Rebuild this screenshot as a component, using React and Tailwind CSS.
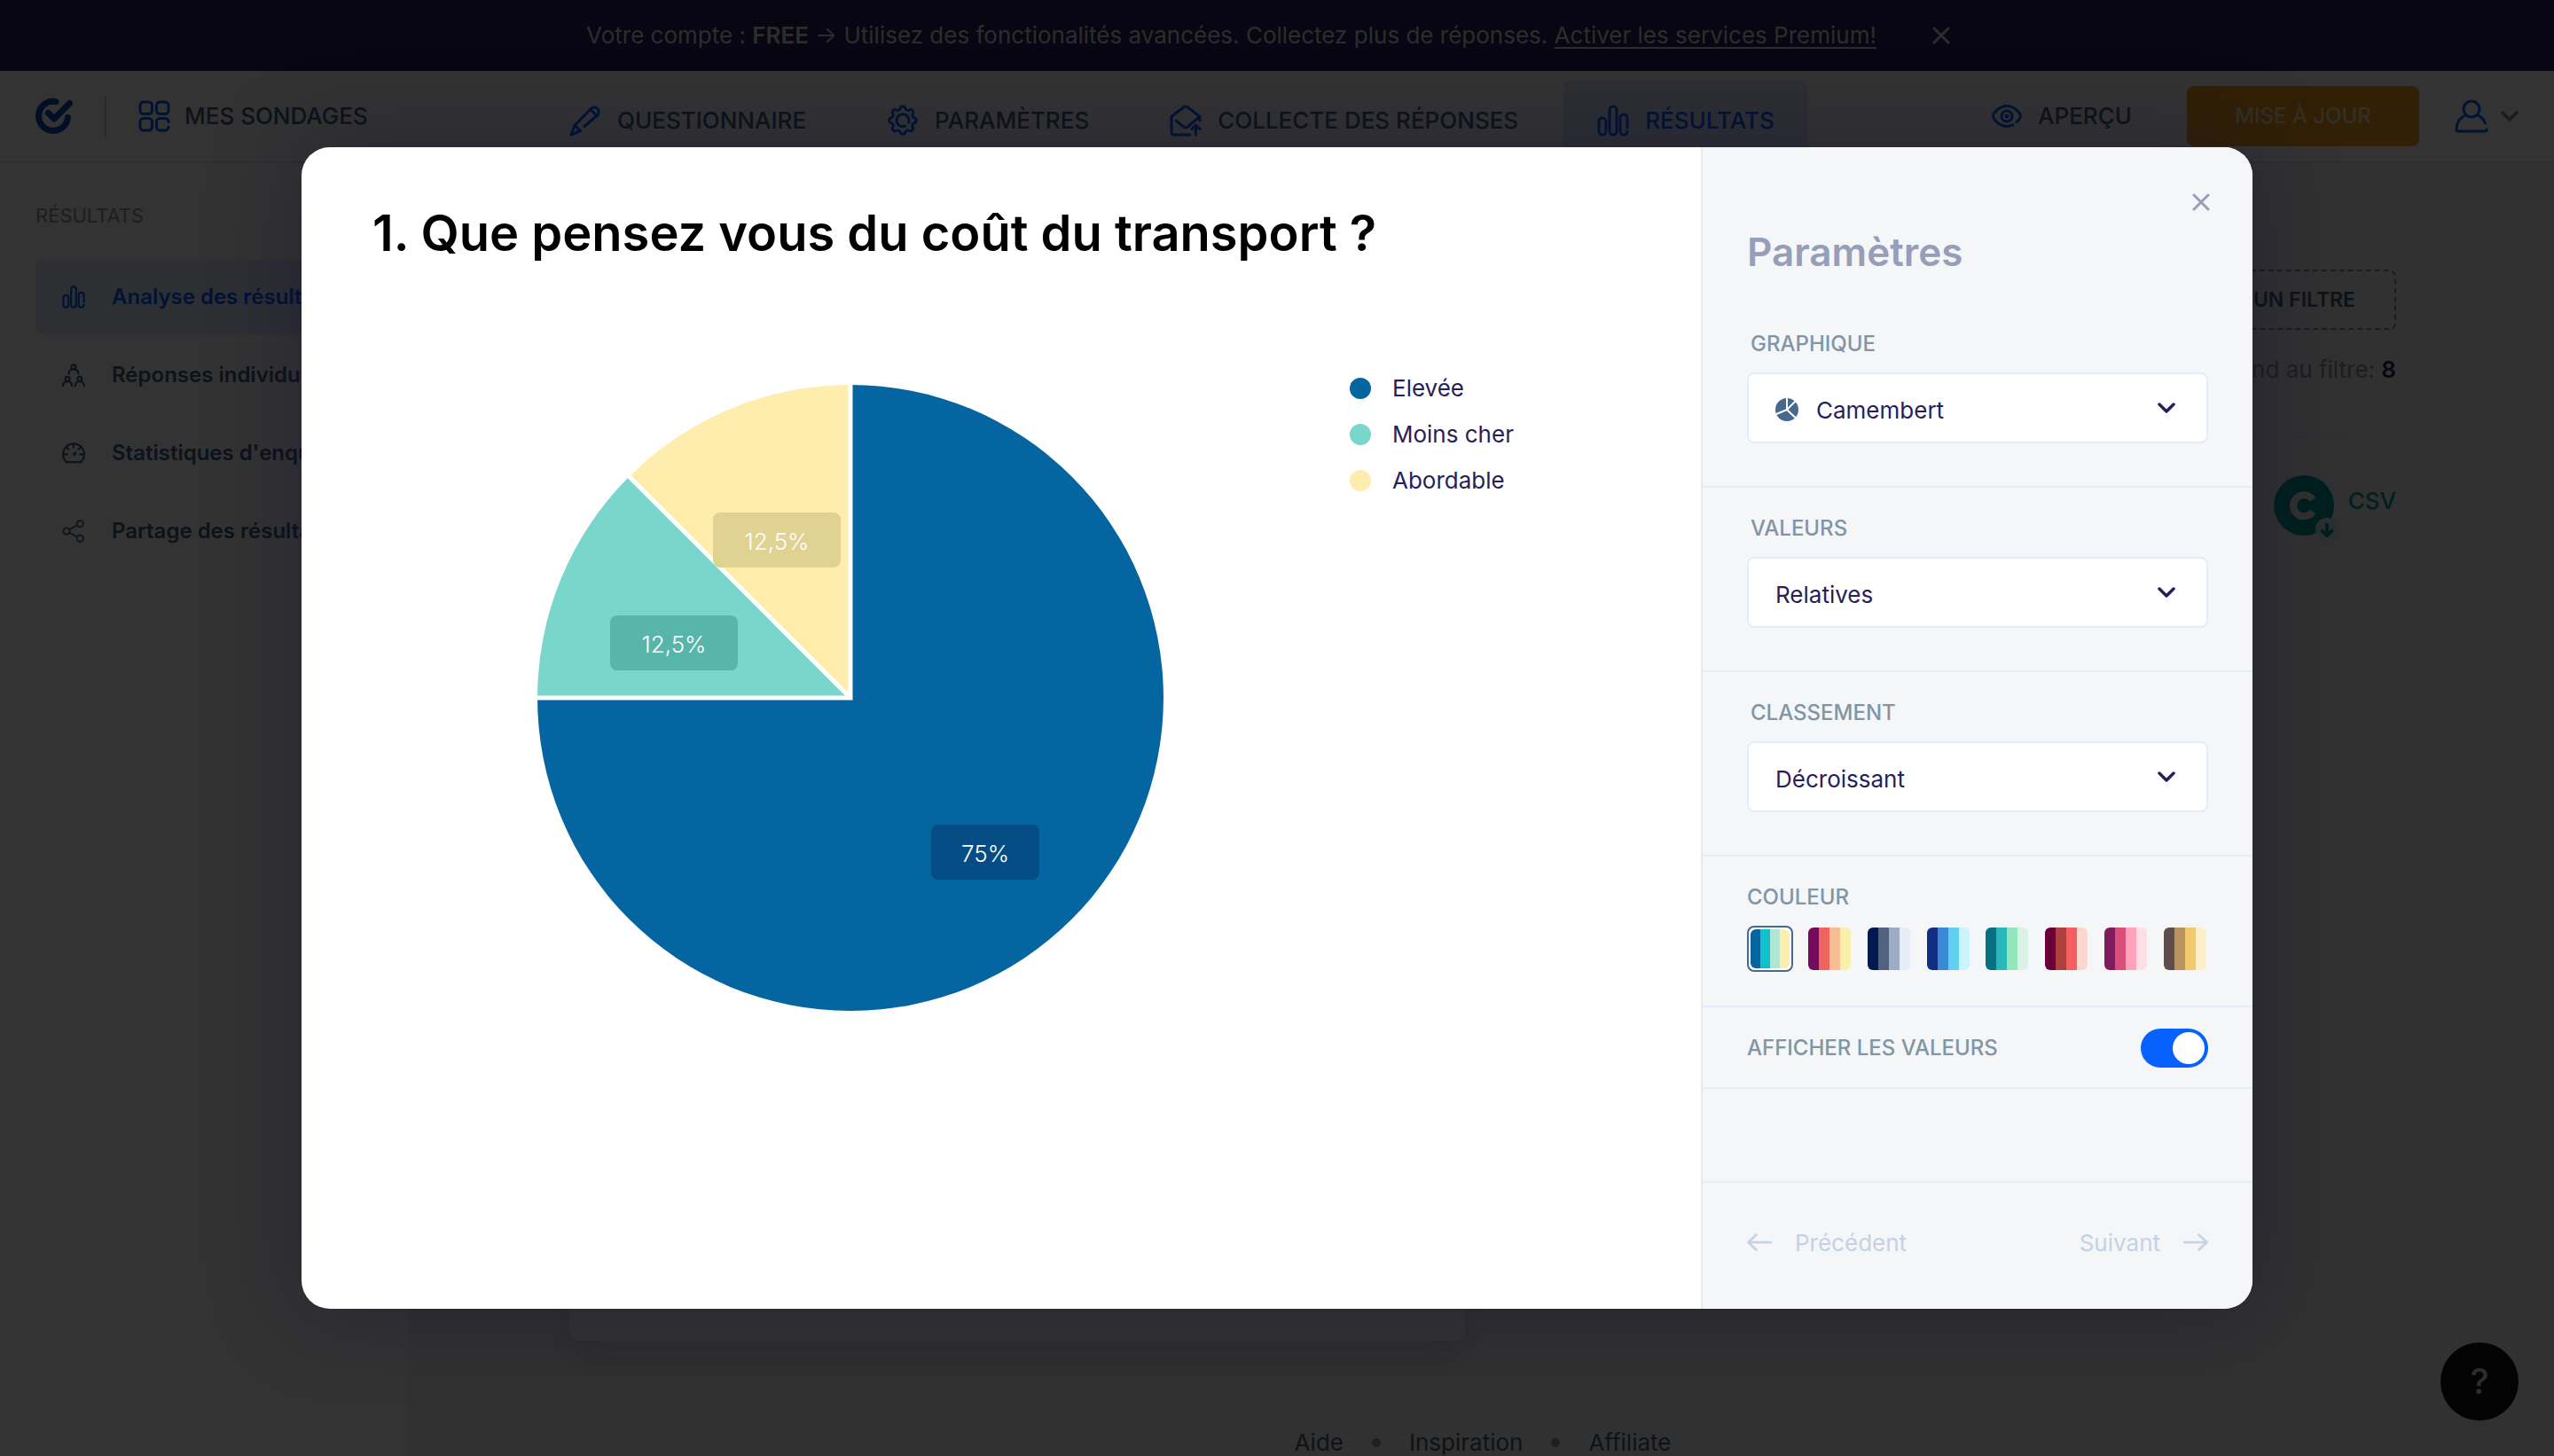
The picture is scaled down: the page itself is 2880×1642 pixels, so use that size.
import { useState } from "react";

const stroke = {
  fill: "none",
  stroke: "currentColor",
  strokeWidth: 3,
  strokeLinecap: "round",
  strokeLinejoin: "round",
};

function Logo() {
  return (
    <svg viewBox="0 0 42 42" className="size-[42px] text-[#0646b0]" aria-hidden="true">
      <g fill="none" stroke="currentColor" strokeWidth="7" strokeLinecap="round" strokeLinejoin="round">
        <path d="M23 4.6A16.5 16.5 0 1 0 36.5 22.5" />
        <path d="M14.5 17.5 21 24 38.5 6.5" />
      </g>
    </svg>
  );
}

function GridIcon() {
  return (
    <svg viewBox="0 0 36 36" className="size-9" aria-hidden="true">
      <g {...stroke}>
        <rect x="2" y="2" width="13.5" height="13.5" rx="4" />
        <rect x="20.5" y="2" width="13.5" height="13.5" rx="4" />
        <rect x="2" y="20.5" width="13.5" height="13.5" rx="4" />
        <path d="M34 24.5a4 4 0 0 0-4-4h-5.500a4 4 0 0 0-4 4v5.500a4 4 0 0 0 4 4h5.500a4 4 0 0 0 4-4" />
      </g>
    </svg>
  );
}

function PencilIcon() {
  return (
    <svg viewBox="0 0 36 36" className="size-9" aria-hidden="true">
      <g {...stroke}>
        <path d="M17 24.500 31.500 12a5 5 0 0 0 .6-7 5 5 0 0 0-7.400-.6L6 23.500 2 34l10.500-4.500" />
        <path d="M24 5.500l7.500 7.500M6 23.500l6.500 6" />
      </g>
    </svg>
  );
}

function GearIcon() {
  return (
    <svg viewBox="0 0 36 36" className="size-9" aria-hidden="true">
      <g {...stroke}>
        <path d="M15.200 4.200a2.900 2.900 0 0 1 5.600 0 3.200 3.200 0 0 0 4.500 1.900 2.900 2.900 0 0 1 4 4 3.200 3.200 0 0 0 1.900 4.800 2.900 2.900 0 0 1 0 5.600 3.200 3.200 0 0 0-1.900 4.800 2.900 2.900 0 0 1-4 4 3.200 3.200 0 0 0-4.500 1.900 2.900 2.900 0 0 1-5.600 0 3.200 3.200 0 0 0-4.500-1.900 2.900 2.900 0 0 1-4-4 3.200 3.200 0 0 0-1.900-4.800 2.900 2.900 0 0 1 0-5.600 3.200 3.200 0 0 0 1.900-4.800 2.900 2.900 0 0 1 4-4 3.200 3.200 0 0 0 4.500-1.900z" />
        <path d="M20.500 24.200A7 7 0 1 1 24.600 20" />
      </g>
    </svg>
  );
}

function EnvelopeIcon() {
  return (
    <svg viewBox="0 0 36 36" className="size-9" aria-hidden="true">
      <g {...stroke}>
        <path d="M2 13.500 16 2.800a3.300 3.300 0 0 1 4 0L34 13.500V18" />
        <path d="M2 13.500V31a3 3 0 0 0 3 3h18" />
        <path d="M7 18l9 7.200a3.300 3.300 0 0 0 4 0L33.500 14" />
        <path d="M29.500 34V24M25 27.500l4.500-4.500 4.500 4.500" />
      </g>
    </svg>
  );
}

function BarsIcon({ className }) {
  return (
    <svg viewBox="0 0 36 36" className={className} aria-hidden="true">
      <g {...stroke}>
        <rect x="2" y="15" width="8" height="19" rx="4" />
        <rect x="14" y="2" width="8" height="32" rx="4" />
        <path d="M34 26V15a4 4 0 0 0-8 0v15a4 4 0 0 0 8 0" />
      </g>
    </svg>
  );
}

function PeopleIcon() {
  return (
    <svg viewBox="0 0 36 36" className="size-[26px]" aria-hidden="true">
      <g {...stroke}>
        <circle cx="18" cy="5.500" r="3.500" />
        <path d="M10.500 16c0-4.500 3-7 7.500-7s7.500 2.500 7.500 7" />
        <circle cx="8.500" cy="24" r="3.500" />
        <path d="M1.500 35c0-4.500 2.500-7 7-7s7 2.500 7 7" />
        <circle cx="27.500" cy="24" r="3.500" />
        <path d="M20.500 35c0-4.500 2.500-7 7-7s7 2.500 7 7" />
      </g>
    </svg>
  );
}

function GaugeIcon() {
  return (
    <svg viewBox="0 0 36 36" className="size-[26px]" aria-hidden="true">
      <g {...stroke}>
        <path d="M7 32a16.500 16.500 0 1 1 22 0z" />
        <path d="M18 4v5M3 20h5M28 20h5M8 10l2 2M28 10l-2 2" />
      </g>
      <path d="M23.500 14.500 20 23.500l-2-2.500-3-1.500z" fill="currentColor" />
    </svg>
  );
}

function ShareIcon() {
  return (
    <svg viewBox="0 0 36 36" className="size-[26px]" aria-hidden="true">
      <g {...stroke} strokeWidth="2.500">
        <circle cx="7" cy="18" r="5" />
        <circle cx="28" cy="6.500" r="5" />
        <circle cx="28" cy="29.500" r="5" />
        <path d="M11.500 15.500 23.500 9M11.500 20.500 23.500 27" />
      </g>
    </svg>
  );
}

function EyeIcon() {
  return (
    <svg viewBox="0 0 34 26" className="h-[26px] w-[34px] text-[#0661ff]" aria-hidden="true">
      <g {...stroke}>
        <path d="M28 19.500c2.600-2.200 4.500-4.900 4.500-6.500C32.500 9.500 25 1.500 17 1.500S1.500 9.500 1.500 13 9 24.500 17 24.500c2.500 0 4.700-.6 6.800-1.600" />
        <circle cx="17" cy="13" r="6" />
      </g>
      <circle cx="17" cy="13" r="2.500" fill="currentColor" />
    </svg>
  );
}

function UserIcon() {
  return (
    <svg viewBox="0 0 38 38" className="size-[38px] text-[#0661ff]" aria-hidden="true">
      <g {...stroke}>
        <circle cx="19" cy="11" r="9" />
        <path d="M12.500 17.500C6 20.500 2 26.500 2 34a2 2 0 0 0 2 2h30a2 2 0 0 0 2-2M25.500 17.500c4.500 2 7.500 5 9 9.500" />
      </g>
    </svg>
  );
}

function Cross({ className }) {
  return (
    <svg viewBox="0 0 20 20" className={className} aria-hidden="true">
      <path d="M2 2l16 16M18 2 2 18" fill="none" stroke="currentColor" strokeWidth="3" strokeLinecap="round" />
    </svg>
  );
}

function Chevron({ className }) {
  return (
    <svg viewBox="0 0 20 12" className={className} aria-hidden="true">
      <path d="M2 2l8 8 8-8" fill="none" stroke="currentColor" strokeWidth="3.500" strokeLinecap="round" strokeLinejoin="round" />
    </svg>
  );
}

function Arrow({ right }) {
  return (
    <svg viewBox="0 0 28 20" className="h-5 w-7" aria-hidden="true">
      <path
        d={right ? "M1 10h25.500M17.500 1.500 26.500 10l-9 8.500" : "M27 10H1.500M10.500 1.500 1.500 10l9 8.500"}
        fill="none"
        stroke="currentColor"
        strokeWidth="2.500"
        strokeLinecap="round"
        strokeLinejoin="round"
      />
    </svg>
  );
}

function MiniPie() {
  return (
    <svg viewBox="0 0 26 26" className="size-[26px]" aria-hidden="true">
      <circle cx="13" cy="13" r="13" fill="#466a8c" />
      <path d="M13 0v13L1 18M13 13l9.500-9.500M13 13l10 9.500" fill="none" stroke="#fff" strokeWidth="2" />
    </svg>
  );
}

const navItems = [
  { label: "QUESTIONNAIRE", icon: <PencilIcon /> },
  { label: "PARAMÈTRES", icon: <GearIcon /> },
  { label: "COLLECTE DES RÉPONSES", icon: <EnvelopeIcon /> },
  { label: "RÉSULTATS", icon: <BarsIcon className="size-9" />, active: true },
];

const sideItems = [
  { label: "Analyse des résultats", icon: <BarsIcon className="size-[26px]" />, active: true },
  { label: "Réponses individuelles", icon: <PeopleIcon /> },
  { label: "Statistiques d'enquête", icon: <GaugeIcon /> },
  { label: "Partage des résultats", icon: <ShareIcon /> },
];

function Banner() {
  return (
    <div className="flex h-20 items-center justify-center bg-[#281e5a] pr-5 text-[26px] leading-9 text-[#dcdcdc]">
      <p>
        Votre compte : <strong className="font-semibold">FREE</strong> → Utilisez des fonctionalités avancées. Collectez
        plus de réponses.{" "}
        <a href="#premium" className="underline underline-offset-4">
          Activer les services Premium!
        </a>
      </p>
      <button type="button" aria-label="Fermer le bandeau" className="ml-[63px]">
        <Cross className="size-5" />
      </button>
    </div>
  );
}

function Header() {
  return (
    <header className="flex h-[104px] border-b-2 border-[#e1ebfa] bg-white text-[26px] leading-9 font-medium text-[#41607d]">
      <div className="flex w-[602px] shrink-0 items-center pl-10">
        <Logo />
        <span className="mr-9 ml-9 h-[46px] w-0.5 bg-[#c8d7e6]" />
        <a href="#sondages" className="flex items-center gap-4">
          <span className="text-[#0661ff]">
            <GridIcon />
          </span>
          MES SONDAGES
        </a>
      </div>
      <nav className="flex flex-1 items-end gap-[11px] whitespace-nowrap">
        {navItems.map((item) => (
          <a
            key={item.label}
            href="#nav"
            className={
              item.active
                ? "flex h-[92px] items-center gap-[18px] rounded-t-xl bg-[#e1ebff] px-[38px] text-[#0661ff]"
                : "flex h-[92px] items-center gap-[18px] px-10"
            }
          >
            <span className="text-[#0661ff]">{item.icon}</span>
            {item.label}
          </a>
        ))}
      </nav>
      <div className="flex items-center pr-10">
        <a href="#apercu" className="mr-[62px] flex items-center gap-[18px]">
          <EyeIcon />
          APERÇU
        </a>
        <button type="button" className="mr-10 h-[68px] w-[262px] rounded-lg bg-[#f5a019] text-2xl font-medium text-[#ffe6be]">
          MISE À JOUR
        </button>
        <button type="button" aria-label="Compte" className="flex items-center gap-[14px] text-[#7d8c9b]">
          <UserIcon />
          <Chevron className="h-3 w-5" />
        </button>
      </div>
    </header>
  );
}

function Sidebar() {
  return (
    <aside className="w-[462px] shrink-0 border-r-2 border-[#f2f2f2] bg-white pt-[43px] pl-10">
      <h2 className="text-[22px] leading-8 text-[#8c96aa]">RÉSULTATS</h2>
      <ul className="mt-[34px] flex flex-col gap-1 text-2xl font-semibold text-[#41607d]">
        {sideItems.map((item) => (
          <li key={item.label}>
            <a
              href="#section"
              className={
                item.active
                  ? "flex h-[84px] items-center gap-[30px] rounded-lg bg-[#e1ebff] px-[30px] text-[#0661ff]"
                  : "flex h-[84px] items-center gap-[30px] px-[30px]"
              }
            >
              {item.icon}
              {item.label}
            </a>
          </li>
        ))}
      </ul>
    </aside>
  );
}

function Main() {
  return (
    <main className="flex min-w-0 flex-1 flex-col bg-[#f5f5f5] pr-[178px] pl-[180px]">
      <div className="flex flex-col items-end pt-[120px]">
        <button
          type="button"
          className="h-[68px] rounded-lg border-2 border-dashed border-[#828c96] px-11 text-[23px] font-semibold text-[#41607d]"
        >
          AJOUTER UN FILTRE
        </button>
        <p className="mt-[27px] text-[26px] leading-9 text-[#8c96aa]">
          Correspond au filtre: <strong className="font-semibold text-[#281e5a]">8</strong>
        </p>
      </div>
      <hr className="mt-[57px] border-t-2 border-[#e6ebf5]" />
      <div className="mt-[42px] flex justify-end">
        <a href="#csv" className="flex h-[68px] items-start gap-[10px] text-[26px] leading-[58px] font-medium text-[#059b96]">
          <svg viewBox="0 0 74 74" className="-mb-1.5 size-[74px]" aria-hidden="true">
            <circle cx="34" cy="34" r="34" fill="#059b96" />
            <path d="M44 27.500a12 12 0 1 0 0 13.500" fill="none" stroke="#f5f5f5" strokeWidth="8" />
            <circle cx="60" cy="61" r="13" fill="#d2f0f0" />
            <path d="M60 54v13M53.500 61.500 60 68l6.500-6.500" fill="none" stroke="#059b96" strokeWidth="4" />
          </svg>
          CSV
        </a>
      </div>
      <div className="mt-[68px] h-[840px] w-[1010px] shrink-0 rounded-xl bg-white shadow-[0_20px_40px_rgba(40,30,90,0.12)]" />
      <footer className="mt-[95px] flex items-center justify-center gap-8 text-[26px] leading-10 whitespace-nowrap text-[#41607d]">
        <a href="#aide">Aide</a>
        <span className="size-2.5 rounded-full bg-[#9696af]" />
        <a href="#inspiration">Inspiration</a>
        <span className="size-2.5 rounded-full bg-[#9696af]" />
        <a href="#affiliate">Affiliate</a>
      </footer>
    </main>
  );
}

const slices = [
  { label: "Elevée", dot: "bg-[#0565a0]" },
  { label: "Moins cher", dot: "bg-[#79d6ca]" },
  { label: "Abordable", dot: "bg-[#ffedae]" },
];

function PieChart({ showValues }) {
  return (
    <svg viewBox="0 0 706 706" className="mt-[22px] size-[706px] shrink-0" role="img" aria-label="Répartition des réponses">
      <path d="M353 353V0A353 353 0 1 1 0 353z" fill="#0565a0" />
      <path d="M353 353H0A353 353 0 0 1 103.400 103.400z" fill="#79d6ca" />
      <path d="M353 353 103.400 103.400A353 353 0 0 1 353 0z" fill="#ffedae" />
      <path d="M353 0v353H0M353 353 102 102" fill="none" stroke="#fff" strokeWidth="5" />
      {showValues && (
        <g className="text-[26px] font-light" fill="#fff" textAnchor="middle">
          <rect x="444" y="496" width="122" height="62" rx="8" fill="#054d84" />
          <text x="505" y="538">75%</text>
          <rect x="82" y="260" width="144" height="62" rx="8" fill="#57b5aa" />
          <text x="154" y="302">12,5%</text>
          <rect x="198" y="144" width="144" height="62" rx="8" fill="#dfd293" />
          <text x="270" y="186">12,5%</text>
        </g>
      )}
    </svg>
  );
}

function SelectField({ id, label, options, icon, className }) {
  return (
    <div className={className}>
      <label htmlFor={id} className="block pl-1 text-2xl leading-8 font-medium text-[#8295a5]">
        {label}
      </label>
      <div className="relative mt-4">
        {icon && <span className="pointer-events-none absolute inset-y-0 left-8 flex items-center pt-1">{icon}</span>}
        <select
          id={id}
          className={
            icon
              ? "h-20 w-full appearance-none rounded-lg border-2 border-[#e3edfa] bg-white pt-1 pl-[76px] text-[26px] text-[#281e5a]"
              : "h-20 w-full appearance-none rounded-lg border-2 border-[#e3edfa] bg-white pt-1 pl-[30px] text-[26px] text-[#281e5a]"
          }
        >
          {options.map((option) => (
            <option key={option}>{option}</option>
          ))}
        </select>
        <span className="pointer-events-none absolute inset-y-0 right-[37px] flex items-center text-[#281e5a]">
          <Chevron className="h-3 w-5" />
        </span>
      </div>
    </div>
  );
}

const palettes = [
  ["bg-[#0565a0]", "bg-[#10c1cc]", "bg-[#b0e6d4]", "bg-[#ffedae]"],
  ["bg-[#750b5c]", "bg-[#ef655e]", "bg-[#f7bd93]", "bg-[#f9f0a9]"],
  ["bg-[#001a50]", "bg-[#516182]", "bg-[#9dadc6]", "bg-[#e5edf6]"],
  ["bg-[#112f82]", "bg-[#3989d6]", "bg-[#62cff0]", "bg-[#cdf4fc]"],
  ["bg-[#067180]", "bg-[#28b8ba]", "bg-[#93e5ba]", "bg-[#daf1e7]"],
  ["bg-[#6a0038]", "bg-[#ad3f3f]", "bg-[#f65f60]", "bg-[#ffd7ce]"],
  ["bg-[#831a60]", "bg-[#d85079]", "bg-[#ffa2ba]", "bg-[#ffdfe4]"],
  ["bg-[#5e4d4b]", "bg-[#b89261]", "bg-[#f0ca6b]", "bg-[#ffefc8]"],
];

function Palettes() {
  const [selected, setSelected] = useState(0);
  return (
    <fieldset className="border-b-2 border-[#e3edfa] px-[50px] pt-[30px] pb-[38px]">
      <legend className="float-left w-full text-2xl leading-8 font-medium text-[#8295a5]">COULEUR</legend>
      <div className="flex w-full justify-between pt-4">
        {palettes.map((colors, i) => (
          <label
            key={colors[0]}
            className={
              i === selected
                ? "block size-[52px] rounded-lg border-2 border-[#466a8c] bg-white p-0.5"
                : "block size-[52px] p-0.5"
            }
          >
            <input
              type="radio"
              name="palette"
              aria-label={`Palette ${i + 1}`}
              checked={i === selected}
              onChange={() => setSelected(i)}
              className="sr-only"
            />
            <span className="flex h-full w-full overflow-hidden rounded-md">
              {colors.map((c) => (
                <span key={c} className={`flex-1 ${c}`} />
              ))}
            </span>
          </label>
        ))}
      </div>
    </fieldset>
  );
}

function Settings({ showValues, onToggle }) {
  return (
    <section className="flex w-[622px] shrink-0 flex-col border-l-2 border-[#e9e9eb] bg-[#f4f6f8]">
      <div className="flex justify-end pt-[42px] pr-[38px]">
        <button type="button" aria-label="Fermer" className="flex size-10 items-center justify-center text-[#969eb9]">
          <Cross className="size-5" />
        </button>
      </div>
      <h2 className="mt-1.5 px-[50px] text-[44px] leading-[60px] font-semibold text-[#969eb9]">Paramètres</h2>
      <SelectField
        id="chart"
        label="GRAPHIQUE"
        options={["Camembert"]}
        icon={<MiniPie />}
        className="mt-[58px] border-b-2 border-[#e3edfa] px-[50px] pb-12"
      />
      <SelectField
        id="values"
        label="VALEURS"
        options={["Relatives"]}
        className="border-b-2 border-[#e3edfa] px-[50px] pt-[30px] pb-12"
      />
      <SelectField
        id="order"
        label="CLASSEMENT"
        options={["Décroissant"]}
        className="border-b-2 border-[#e3edfa] px-[50px] pt-[30px] pb-12"
      />
      <Palettes />
      <label className="flex h-[92px] cursor-pointer items-center justify-between border-b-2 border-[#e3edfa] px-[50px] pt-0.5 text-2xl font-medium text-[#8295a5]">
        AFFICHER LES VALEURS
        <input
          type="checkbox"
          role="switch"
          checked={showValues}
          onChange={(e) => onToggle(e.target.checked)}
          className="peer sr-only"
        />
        <span className="flex h-11 w-[76px] items-center rounded-full bg-[#c3cfdc] px-1 peer-checked:justify-end peer-checked:bg-[#0661ff]">
          <span className="size-9 rounded-full bg-white" />
        </span>
      </label>
      <div className="mt-auto flex h-36 items-center justify-between border-t-2 border-[#e3edfa] px-[50px] pb-2 text-[26px] text-[#c3d2e4]">
        <button type="button" className="flex items-center gap-[26px]">
          <Arrow />
          Précédent
        </button>
        <button type="button" className="flex items-center gap-[26px]">
          Suivant
          <Arrow right />
        </button>
      </div>
    </section>
  );
}

function ChartDialog() {
  const [showValues, setShowValues] = useState(true);
  return (
    <div className="absolute inset-0 flex bg-black/80 px-[340px] py-[166px]">
      <div
        role="dialog"
        aria-modal="true"
        aria-labelledby="question"
        className="flex flex-1 overflow-hidden rounded-[32px] bg-white shadow-[0_0_100px_rgba(20,16,50,0.4)]"
      >
        <section className="min-w-0 flex-1 pt-[62px] pl-20">
          <h1 id="question" className="text-[56px] leading-[70px] font-semibold text-black">
            1. Que pensez vous du coût du transport ?
          </h1>
          <div className="mt-[114px] flex items-start gap-[210px] pl-[186px]">
            <PieChart showValues={showValues} />
            <ul className="text-[26px] leading-[52px] whitespace-nowrap text-[#281e5a]">
              {slices.map((s) => (
                <li key={s.label} className="flex items-center gap-6">
                  <span className={`size-6 rounded-full ${s.dot}`} />
                  {s.label}
                </li>
              ))}
            </ul>
          </div>
        </section>
        <Settings showValues={showValues} onToggle={setShowValues} />
      </div>
    </div>
  );
}

export default function App() {
  return (
    <div className="relative flex h-screen flex-col overflow-hidden bg-white font-['Inter',sans-serif]">
      <Banner />
      <Header />
      <div className="flex min-h-0 flex-1">
        <Sidebar />
        <Main />
      </div>
      <button
        type="button"
        aria-label="Aide en ligne"
        className="absolute right-10 bottom-10 size-22 rounded-full bg-[#0f0f0f] text-[40px] font-medium text-[#dcdcdc]"
      >
        ?
      </button>
      <ChartDialog />
    </div>
  );
}
